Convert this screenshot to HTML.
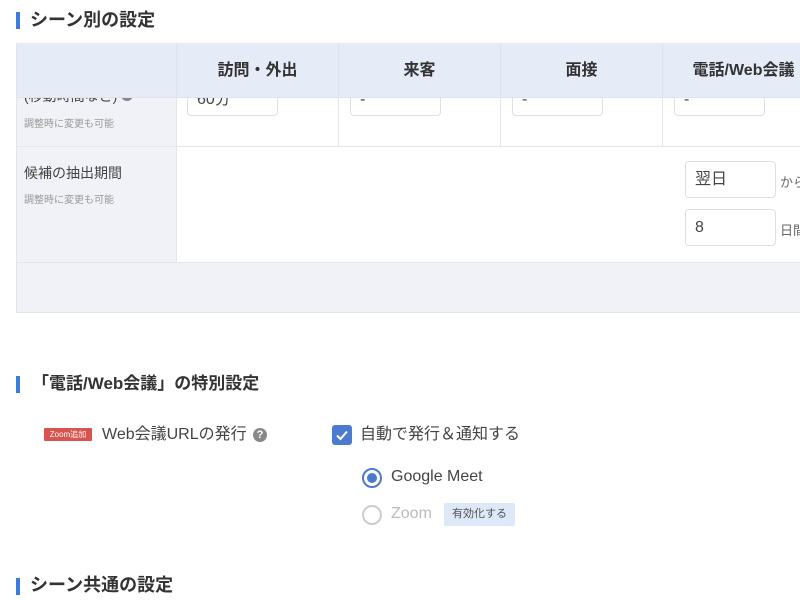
<!DOCTYPE html>
<html><head><meta charset="utf-8">
<style>
*{box-sizing:border-box;margin:0;padding:0}
body{width:800px;height:600px;overflow:hidden;background:#fff;font-family:"Liberation Sans","Noto Sans CJK JP",sans-serif;color:#333;position:relative}
.abs{position:absolute;white-space:nowrap}
.bar{position:absolute;left:16px;width:4px;height:17px;background:#3b7ddd}
.h{position:absolute;left:30px;font-size:18px;font-weight:bold;color:#333;line-height:20px;white-space:nowrap}
.inp{position:absolute;width:91px;background:#fff;border:1px solid #dcdfe5;border-radius:4px;font-size:16px;padding-left:9px;color:#444}
.vl{position:absolute;width:1px;background:#e4e6ea}
.th{position:absolute;top:43px;height:55px;line-height:55px;text-align:center;font-size:16px;font-weight:bold;color:#333;white-space:nowrap}
</style></head><body>
<div class="bar" style="top:12px"></div>
<div class="h" style="top:10px">シーン別の設定</div>

<div class="abs" style="left:16px;top:43px;width:784px;height:270px;border:1px solid #e2e5ea;border-right:none;background:#fff"></div>
<div class="abs" style="left:17px;top:98px;width:159px;height:164px;background:#f0f2f7"></div>
<div class="abs" style="left:17px;top:262px;width:783px;height:50px;background:#f0f2f7;border-top:1px solid #e2e5ea"></div>
<div class="abs" style="left:17px;top:146px;width:783px;height:1px;background:#e4e6ea"></div>
<div class="vl" style="left:176px;top:43px;height:219px"></div>
<div class="vl" style="left:338px;top:43px;height:104px"></div>
<div class="vl" style="left:500px;top:43px;height:104px"></div>
<div class="vl" style="left:662px;top:43px;height:104px"></div>

<div class="abs" style="left:24px;top:98px;width:150px;height:48px;overflow:hidden">
  <div class="abs" style="left:0;top:-12px;font-size:14px;color:#444">(移動時間など) <span style="display:inline-block;width:12px;height:12px;border-radius:6px;background:#888"></span></div>
  <div class="abs" style="left:0;top:17px;font-size:10px;color:#999">調整時に変更も可能</div>
</div>
<div class="abs" style="left:180px;top:98px;width:620px;height:48px;overflow:hidden">
  <div class="inp" style="left:7px;top:-20px;height:38px;line-height:42px">60分</div>
  <div class="inp" style="left:170px;top:-20px;height:38px;line-height:42px">-</div>
  <div class="inp" style="left:332px;top:-20px;height:38px;line-height:42px">-</div>
  <div class="inp" style="left:494px;top:-20px;height:38px;line-height:42px">-</div>
</div>

<div class="th" style="left:17px;width:783px;background:#e5ecf7;border-bottom:1px solid #dde3ec"></div>
<div class="vl" style="left:176px;top:43px;height:55px;background:#dde3ec"></div>
<div class="vl" style="left:338px;top:43px;height:55px;background:#dde3ec"></div>
<div class="vl" style="left:500px;top:43px;height:55px;background:#dde3ec"></div>
<div class="vl" style="left:662px;top:43px;height:55px;background:#dde3ec"></div>
<div class="th" style="left:177px;width:161px">訪問・外出</div>
<div class="th" style="left:339px;width:161px">来客</div>
<div class="th" style="left:501px;width:161px">面接</div>
<div class="th" style="left:663px;width:161px">電話/Web会議</div>

<div class="abs" style="left:24px;top:163px;font-size:14px;color:#444">候補の抽出期間</div>
<div class="abs" style="left:24px;top:191px;font-size:10px;color:#999">調整時に変更も可能</div>
<div class="inp" style="left:685px;top:161px;height:37px;line-height:35px">翌日</div>
<div class="abs" style="left:780px;top:172px;font-size:13px;color:#666">から</div>
<div class="inp" style="left:685px;top:209px;height:37px;line-height:35px">8</div>
<div class="abs" style="left:780px;top:220px;font-size:13px;color:#666">日間</div>

<div class="bar" style="top:376px"></div>
<div class="h" style="top:374px;left:32px;font-size:17px">「電話/Web会議」の特別設定</div>
<div class="abs" style="left:44px;top:428px;width:48px;height:13px;background:#d9534f;color:#fff;font-size:8px;line-height:13px;text-align:center;border-radius:1px">Zoom追加</div>
<div class="abs" style="left:102px;top:425px;font-size:16px;color:#444;line-height:20px">Web会議URLの発行</div>
<div class="abs" style="left:253px;top:428px;width:14px;height:14px;border-radius:7px;background:#888;color:#fff;font-size:11px;line-height:14px;text-align:center;font-weight:bold">?</div>
<div class="abs" style="left:332px;top:425px;width:20px;height:20px;border-radius:3px;background:#4a7bd0">
<svg width="20" height="20" viewBox="0 0 20 20"><path d="M5 10.5l3.5 3.5 6.5-7.5" fill="none" stroke="#fff" stroke-width="2"/></svg></div>
<div class="abs" style="left:360px;top:425px;font-size:16px;color:#444;line-height:20px">自動で発行＆通知する</div>
<div class="abs" style="left:362px;top:468px;width:20px;height:20px;border-radius:10px;border:2px solid #4a7bd0"><div style="position:absolute;left:3px;top:3px;width:10px;height:10px;border-radius:5px;background:#4a7bd0"></div></div>
<div class="abs" style="left:391px;top:467px;font-size:16px;color:#444;line-height:20px">Google Meet</div>
<div class="abs" style="left:362px;top:505px;width:20px;height:20px;border-radius:10px;border:2px solid #ccc"></div>
<div class="abs" style="left:391px;top:504px;font-size:16px;color:#bbb;line-height:20px">Zoom</div>
<div class="abs" style="left:444px;top:503px;width:71px;height:23px;background:#dde8f8;border-radius:2px;font-size:11px;color:#555;line-height:23px;text-align:center">有効化する</div>

<div class="bar" style="top:578px"></div>
<div class="h" style="top:575px">シーン共通の設定</div>
</body></html>
